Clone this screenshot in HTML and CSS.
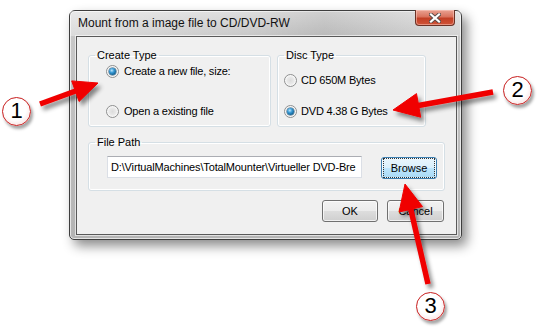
FILE: index.html
```html
<!DOCTYPE html>
<html lang="en">
<head>
    <meta charset="UTF-8">
    <title>Mount from a image file to CD/DVD-RW</title>
    <link rel="stylesheet" href="styles.css">
</head>
<body>
    <div class="window">
        <div class="titlebar">
            <span class="title">Mount from a image file to CD/DVD-RW</span>
            <span class="close">
                <svg width="12" height="10" viewBox="0 0 12 10">
                    <path d="M2 1.5 L10 8.5 M10 1.5 L2 8.5" stroke="#5a4a48" stroke-width="4" stroke-linecap="square"/>
                    <path d="M2 1.5 L10 8.5 M10 1.5 L2 8.5" stroke="#fff" stroke-width="2.2" stroke-linecap="square"/>
                </svg>
            </span>
        </div>
        <div class="client">
            <div class="row-top">
                <fieldset class="group group-create">
                    <legend>Create Type</legend>
                    <div class="option first"><span class="radio checked"></span>Create a new file, size:</div>
                    <div class="option second"><span class="radio"></span>Open a existing file</div>
                </fieldset>
                <fieldset class="group group-disc">
                    <legend>Disc Type</legend>
                    <div class="option first"><span class="radio"></span>CD 650M Bytes</div>
                    <div class="option second"><span class="radio checked"></span>DVD 4.38 G Bytes</div>
                </fieldset>
            </div>
            <fieldset class="group group-path">
                <legend>File Path</legend>
                <div class="path-row">
                    <div class="path-input">D:\VirtualMachines\TotalMounter\Virtueller DVD-Bre</div>
                    <button class="btn btn-browse"><span>Browse</span></button>
                </div>
            </fieldset>
            <div class="actions">
                <button class="btn btn-ok">OK</button>
                <button class="btn btn-cancel">Cancel</button>
            </div>
        </div>
    </div>

    <!-- annotation arrows -->
    <svg class="arrows" width="543" height="332" viewBox="0 0 543 332">
        <defs>
            <filter id="shadow" x="-20%" y="-20%" width="140%" height="140%">
                <feDropShadow dx="3" dy="4" stdDeviation="2" flood-color="#000" flood-opacity="0.45"/>
            </filter>
        </defs>
        <g fill="#f00000" stroke="#f00000" filter="url(#shadow)">
            <line x1="40" y1="104" x2="77" y2="90.5" stroke-width="5.5"/>
            <polygon points="98,83 79.1,101.5 71.7,80.9" stroke-width="1" stroke-linejoin="round"/>
            <line x1="493" y1="92" x2="417" y2="105.7" stroke-width="5.5"/>
            <polygon points="393,110 420.7,117.2 416.5,93.6" stroke-width="1" stroke-linejoin="round"/>
            <line x1="428" y1="284" x2="410.5" y2="208" stroke-width="5.5"/>
            <polygon points="405,184 422.5,206.6 399.1,212" stroke-width="1" stroke-linejoin="round"/>
        </g>
    </svg>
    <div class="callout callout-1">1</div>
    <div class="callout callout-2">2</div>
    <div class="callout callout-3">3</div>
</body>
</html>
```
FILE: styles.css
```css
body {
    margin: 0;
    width: 543px;
    height: 332px;
    background-color: #fff;
    font-family: "Liberation Sans", Arial, sans-serif;
    font-size: 11px;
    color: #000;
    position: relative;
    overflow: hidden;
}

/* dialog frame */
.window {
    margin: 10px 0 0 69px;
    width: 393px;
    height: 230px;
    box-sizing: border-box;
    border: 1px solid #3e3e3e;
    border-radius: 6px 6px 5px 5px;
    background: linear-gradient(180deg, #dedede 0%, #c8c8c8 25px, #b4b4b4 100%);
    box-shadow: inset 0 0 0 1px rgba(255, 255, 255, 0.65), 5px 6px 12px rgba(0, 0, 0, 0.45);
}
.titlebar {
    height: 25px;
    display: flex;
    justify-content: space-between;
    align-items: flex-start;
    padding-left: 8px;
    background: linear-gradient(90deg, rgba(255,255,255,0.35) 0%, rgba(255,255,255,0) 45%, rgba(0,0,0,0.07) 65%, rgba(255,255,255,0.2) 100%);
}
.title {
    font-size: 12px;
    line-height: 14px;
    padding-top: 5px;
    color: #111;
}
.close {
    margin: -1px 6px 0 0;
    width: 40px;
    height: 16px;
    box-sizing: border-box;
    border: 1px solid #6b3226;
    border-top: none;
    border-radius: 0 0 4px 4px;
    background: linear-gradient(180deg, #e9a292 0%, #d9735e 45%, #c23f25 55%, #d05438 100%);
    box-shadow: inset 0 0 0 1px rgba(255, 210, 200, 0.5);
    display: flex;
    align-items: center;
    justify-content: center;
}
.close svg {
    display: block;
}

/* client area */
.client {
    margin: 0 5px 0 6px;
    width: 381px;
    height: 199px;
    box-sizing: border-box;
    border: 1px solid #595959;
    background-color: #f0f0f0;
    padding: 11px 11px 0 11px;
    box-shadow: 0 0 0 1px rgba(255, 255, 255, 0.6);
}
.row-top {
    display: flex;
    gap: 6px;
}
.group {
    margin: 0;
    padding: 0;
    min-width: 0;
    box-sizing: border-box;
    border: 1px solid #d5dfe5;
    border-radius: 3px;
    box-shadow: inset 0 0 0 1px #fff;
}
.group legend {
    margin-left: 6px;
    padding: 0 2px;
    line-height: 14px;
}
.group-create {
    width: 183px;
    height: 79px;
}
.group-disc {
    width: 149px;
    height: 79px;
}
.group-path {
    width: 357px;
    height: 56px;
    margin-top: 8px;
}

/* radio buttons */
.option {
    display: flex;
    align-items: center;
    height: 14px;
    line-height: 14px;
    letter-spacing: -0.2px;
    white-space: nowrap;
}
.group-create .option {
    padding-left: 17px;
}
.group-create .first {
    margin-top: 2px;
}
.group-create .second {
    margin-top: 26px;
}
.group-disc .option {
    padding-left: 6px;
}
.group-disc .first {
    margin-top: 11px;
}
.group-disc .second {
    margin-top: 17px;
}
.group-create .radio {
    margin-right: 5px;
}
.group-disc .radio {
    margin-right: 4px;
}
.radio {
    width: 13px;
    height: 13px;
    box-sizing: border-box;
    border-radius: 50%;
    border: 1px solid #8e8f8f;
    background: radial-gradient(circle at 50% 50%, #dcdcdc 0%, #e9e9e9 45%, #fbfbfb 70%);
    display: flex;
    align-items: center;
    justify-content: center;
    flex: none;
}
.radio.checked::after {
    content: "";
    width: 7px;
    height: 7px;
    border-radius: 50%;
    background: radial-gradient(circle at 40% 35%, #bfe6fb 0%, #3a9bd6 35%, #0e5d8f 75%, #1b70a8 100%);
    box-shadow: 0 0 0 0.5px #2f5e7e;
}

/* file path row */
.path-row {
    display: flex;
    align-items: flex-start;
    margin: 7px 0 0 18px;
}
.path-input {
    width: 255px;
    height: 22px;
    box-sizing: border-box;
    border: 1px solid #dbdfe6;
    border-top-color: #abadb3;
    background-color: #fff;
    padding-left: 3px;
    line-height: 20px;
    white-space: nowrap;
    overflow: hidden;
    letter-spacing: -0.15px;
}

/* push buttons */
.btn {
    font-family: "Liberation Sans", Arial, sans-serif;
    font-size: 11px;
    color: #000;
    height: 22px;
    padding: 0;
    box-sizing: border-box;
    border: 1px solid #707070;
    border-radius: 3px;
    background: linear-gradient(180deg, #f2f2f2 0%, #ebebeb 50%, #dddddd 51%, #cfcfcf 100%);
    box-shadow: inset 0 0 0 1px rgba(255, 255, 255, 0.7);
}
.btn-browse {
    width: 56px;
    margin: 1px 0 0 19px;
    border-color: #3c7fb1;
    background: linear-gradient(180deg, #eaf6fd 0%, #d9f0fc 50%, #bee6fd 51%, #a7d9f5 100%);
    display: flex;
    align-items: center;
    justify-content: center;
}
.btn-browse span {
    outline: 1px dotted #333;
    outline-offset: 3px;
    width: 44px;
    line-height: 12px;
}
.actions {
    display: flex;
    justify-content: flex-end;
    gap: 9px;
    margin: 9px 1px 0 0;
}
.btn-ok {
    width: 56px;
}
.btn-cancel {
    width: 57px;
}

/* annotations over the screenshot */
.arrows {
    position: absolute;
    left: 0;
    top: 0;
    pointer-events: none;
}
.callout {
    position: absolute;
    width: 29px;
    height: 29px;
    box-sizing: border-box;
    border-radius: 50%;
    border: 1.5px solid #c81e1e;
    background: radial-gradient(circle at 45% 40%, #ffffff 0%, #ffffff 50%, #f6dede 85%, #eab4b4 100%);
    box-shadow: 2px 3px 3px rgba(0, 0, 0, 0.35);
    font-size: 22px;
    line-height: 26px;
    text-align: center;
    color: #000;
}
.callout-1 {
    left: 2px;
    top: 97px;
}
.callout-2 {
    left: 503px;
    top: 76px;
}
.callout-3 {
    left: 416px;
    top: 292px;
}
```
